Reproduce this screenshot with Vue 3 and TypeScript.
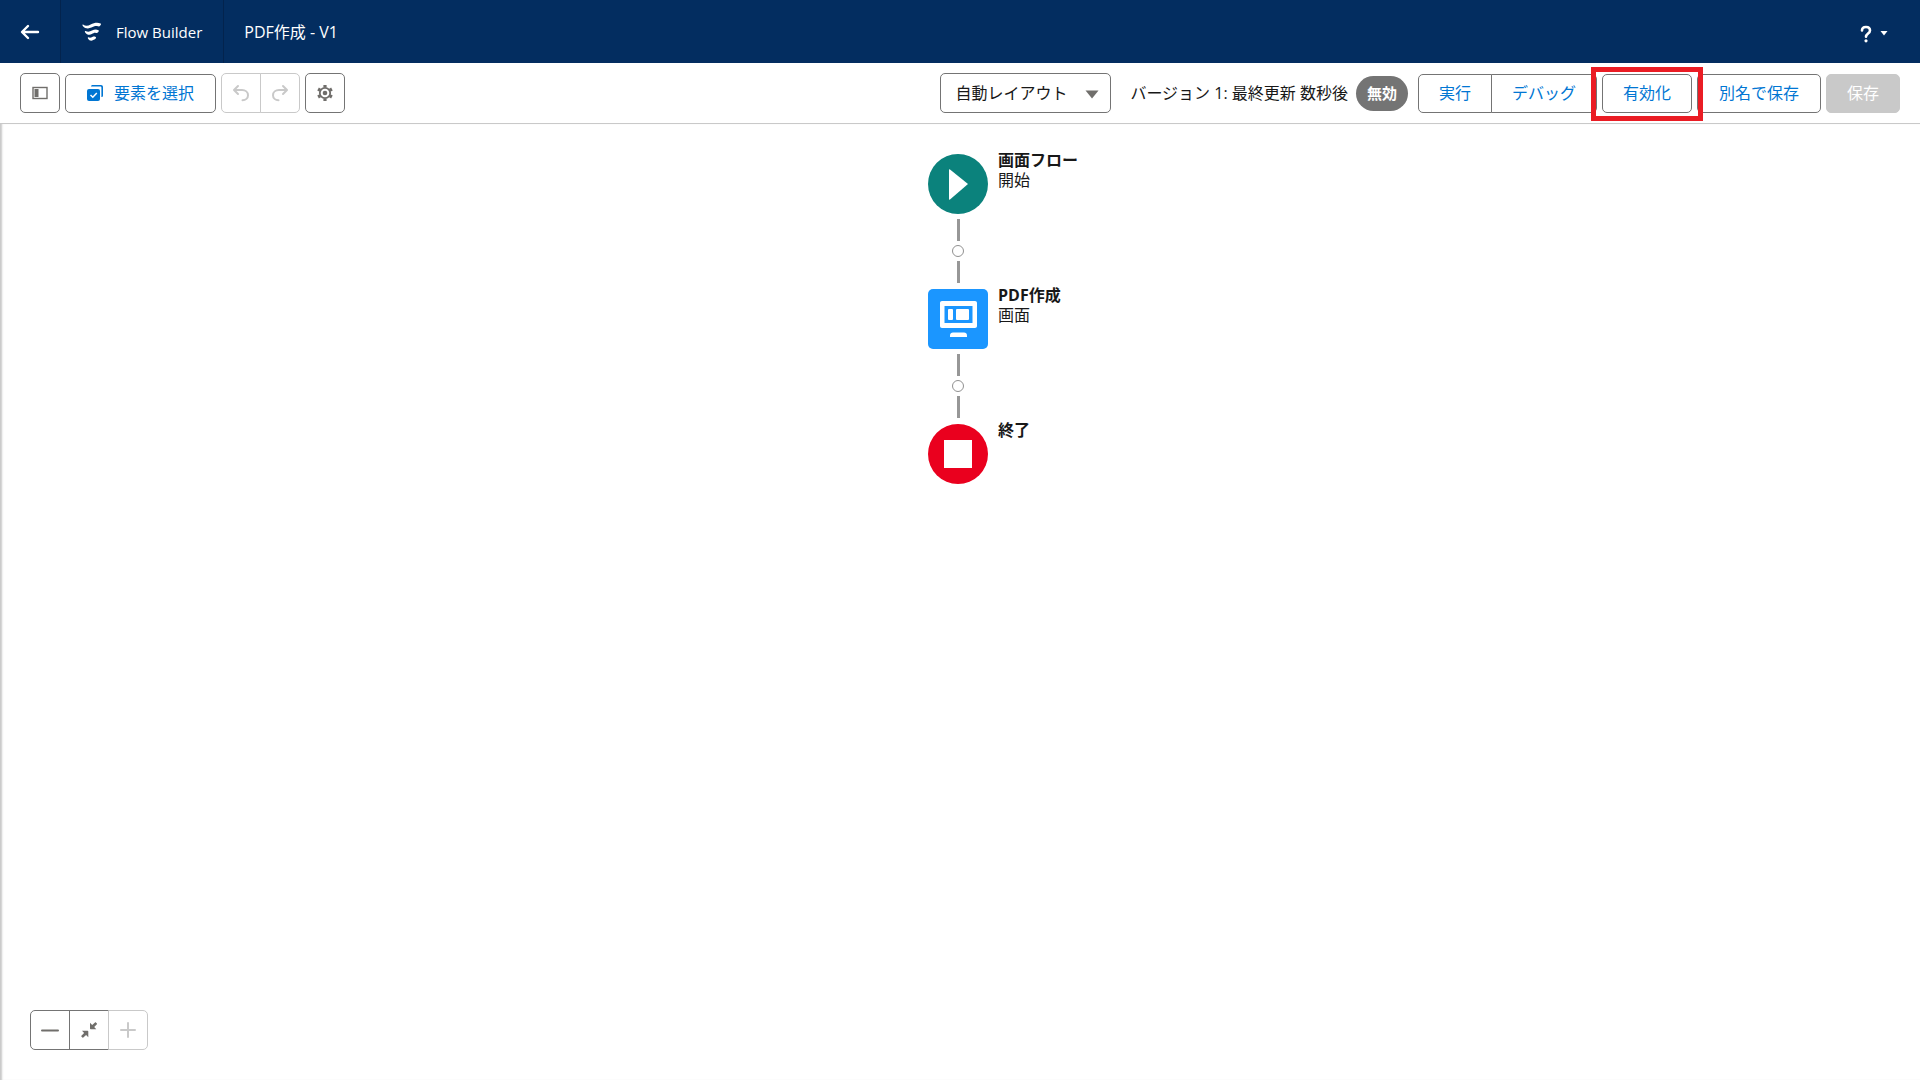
<script setup lang="ts">
import { ref } from 'vue'

type NodeKind = 'start' | 'screen' | 'end'

interface FlowNode {
  kind: NodeKind
  title: string
  subtitle?: string
}

const layout = ref('auto')

const nodes: FlowNode[] = [
  { kind: 'start', title: '画面フロー', subtitle: '開始' },
  { kind: 'screen', title: 'PDF作成', subtitle: '画面' },
  { kind: 'end', title: '終了' },
]
</script>

<template>
  <div class="builder">
    <header class="header">
      <a class="back" href="#" aria-label="戻る">
        <svg width="20" height="16" viewBox="0 0 20 16" fill="none" stroke="#fff" stroke-width="2.4" stroke-linecap="round" stroke-linejoin="round">
          <path d="M18 8H2.4M8 2L2 8l6 6" />
        </svg>
      </a>
      <div class="brand">
        <svg width="20" height="20" viewBox="0 0 20 20" fill="#fff">
          <path d="M1 2.6C3.600 4.400 6 4 8.600 2.600C12 .8 15.500 .2 18.600 1.500C19.300 1.800 19 2.700 18.500 3.200C17.600 4.300 17 4.700 15.800 4.300C13.600 3.700 11.600 4.500 9.400 5.600C6.400 7 3 6.600 1 4.200C.4 3.400 .2 2.200 1 2.600Z" />
          <path d="M3.500 9C6 10.200 7.800 9.800 10 8.600C12.200 7.500 14.300 7.200 16.400 8.200C17.200 8.600 16.800 9.400 16.300 10C15.500 11 14.800 11.200 13.800 10.900C12.400 10.600 11.300 11.300 9.800 12.100C7.400 13.300 4.600 12.600 3.200 10.400C2.700 9.600 2.700 8.600 3.500 9Z" />
          <path d="M6.400 15.300C8 16 9 15.600 10.300 15C11.400 14.400 12.600 14.400 13.700 15C14.400 15.500 14 16.200 13.500 16.800C12.700 17.800 12 17.600 11.200 18.100C9.400 19.300 7.200 18.800 6.100 16.800C5.700 15.900 5.600 15 6.400 15.300Z" />
        </svg>
        <span>Flow Builder</span>
      </div>
      <h1 class="flow-name">PDF作成 - V1</h1>
      <button class="help" type="button" aria-label="ヘルプ">
        <svg width="12" height="18" viewBox="0 0 12 18" fill="none">
          <path d="M2 5.500C2 3.300 3.700 2 6 2s4 1.400 4 3.500c0 3-4 3-4 6.300" stroke="#fff" stroke-width="2.600" stroke-linecap="round" />
          <circle cx="6" cy="15.800" r="1.600" fill="#fff" />
        </svg>
        <svg width="8" height="5" viewBox="0 0 8 5" fill="#fff"><path d="M.5 0h7L4 4.600z" /></svg>
      </button>
    </header>

    <div class="toolbar">
      <button class="btn icon" type="button" aria-label="ツールボックスを切り替え">
        <svg width="16" height="14" viewBox="0 0 16 14">
          <rect x="1" y="1.500" width="14" height="11" fill="none" stroke="#706e6b" stroke-width="1.400" />
          <rect x="2.500" y="3" width="4" height="8" fill="#706e6b" />
        </svg>
      </button>
      <button class="btn wide" type="button">
        <svg width="16" height="18" viewBox="0 0 16 18">
          <path d="M4 2.500C4 1.500 4.800 1 5.600 1H14c1.200 0 2 .8 2 2v8.400c0 1-.6 1.600-1.600 1.600V3.600c0-.7-.4-1.100-1.100-1.100z" fill="#0176d3" />
          <rect x="0" y="5" width="13" height="12" rx="2" fill="#0176d3" />
          <path d="M3.500 11l2.300 2.300 4-4.200" fill="none" stroke="#fff" stroke-width="1.500" />
        </svg>
        要素を選択
      </button>
      <div class="group">
        <button class="btn icon" type="button" disabled aria-label="元に戻す">
          <svg width="18" height="18" viewBox="0 0 18 18" fill="none" stroke="#c9c9c9" stroke-width="2" stroke-linecap="round" stroke-linejoin="round">
            <path d="M6 2L2 6l4 4M2.500 6H10c3.400 0 6 2.200 6 5.200 0 3-2.400 5-5.500 5" />
          </svg>
        </button>
        <button class="btn icon" type="button" disabled aria-label="やり直し">
          <svg width="18" height="18" viewBox="0 0 18 18" fill="none" stroke="#c9c9c9" stroke-width="2" stroke-linecap="round" stroke-linejoin="round">
            <path d="M12 2l4 4-4 4M15.500 6H8c-3.400 0-6 2.200-6 5.200 0 3 2.400 5 5.500 5" />
          </svg>
        </button>
      </div>
      <button class="btn icon" type="button" aria-label="設定">
        <svg width="18" height="18" viewBox="0 0 18 18" fill="none" stroke="#706e6b">
          <circle cx="9" cy="9" r="5.200" stroke-width="1.800" />
          <g stroke-width="3.200">
            <path d="M9 1v2.600M9 14.400V17M2.070 5l2.250 1.300M13.680 11.700L15.930 13M2.070 13l2.250-1.300M13.680 6.300L15.930 5" />
          </g>
          <circle cx="9" cy="9" r="2.300" fill="#706e6b" stroke="none" />
        </svg>
      </button>

      <div class="layout-picker">
        <select v-model="layout" aria-label="レイアウト">
          <option value="auto">自動レイアウト</option>
          <option value="free">自由形式</option>
        </select>
        <svg class="caret" width="14" height="9" viewBox="0 0 14 9" fill="#706e6b"><path d="M.5 .5h13L7 8.500z" /></svg>
      </div>
      <span class="version">バージョン 1: 最終更新 数秒後</span>
      <span class="badge">無効</span>
      <div class="group actions">
        <button class="btn" type="button">実行</button>
        <button class="btn" type="button">デバッグ</button>
      </div>
      <div class="highlighted">
        <button class="btn" type="button">有効化</button>
      </div>
      <button class="btn wide" type="button">別名で保存</button>
      <button class="btn save" type="button" disabled>保存</button>
    </div>

    <main class="canvas">
      <div class="flow">
        <template v-for="(node, i) in nodes" :key="node.kind">
          <div v-if="i > 0" class="connector">
            <span class="line"></span>
            <button class="add" type="button" aria-label="要素を追加"></button>
            <span class="line"></span>
          </div>
          <div class="node" :class="node.kind">
            <svg v-if="node.kind === 'start'" width="60" height="60" viewBox="0 0 60 60">
              <path d="M22 15.500L40 30 22 45.500c-.6.400-1 .200-1-.5V16c0-.7.400-.9 1-.5z" fill="#fff" />
            </svg>
            <svg v-else-if="node.kind === 'screen'" width="60" height="60" viewBox="0 0 60 60">
              <path fill="#fff" fill-rule="evenodd" d="M14 12h33c1.200 0 2 .8 2 2v23c0 1.200-.8 2-2 2H14c-1.200 0-2-.8-2-2V14c0-1.200.8-2 2-2zM16.500 17v17h28V17z" />
              <rect x="20" y="20" width="5" height="11" rx="1" fill="#fff" />
              <rect x="28" y="20" width="13" height="11" rx="1" fill="#fff" />
              <path d="M22 48v-1.500c0-1.800 1.200-3 3-3h11c1.800 0 3 1.200 3 3V48z" fill="#fff" />
            </svg>
            <svg v-else width="60" height="60" viewBox="0 0 60 60">
              <rect x="16" y="16" width="28" height="28" fill="#fff" />
            </svg>
            <div class="label">
              <strong>{{ node.title }}</strong>
              <span v-if="node.subtitle">{{ node.subtitle }}</span>
            </div>
          </div>
        </template>
      </div>

      <div class="group zoom">
        <button class="btn icon" type="button" aria-label="縮小">
          <svg width="18" height="18" viewBox="0 0 18 18"><path d="M1 9.500h16" stroke="#706e6b" stroke-width="2" stroke-linecap="round" /></svg>
        </button>
        <button class="btn icon" type="button" aria-label="画面に合わせる">
          <svg width="18" height="18" viewBox="0 0 18 18" fill="#706e6b">
            <path d="M10 1.800v5.700c0 .4.300.7.700.7h5.600L14.200 6l2.700-2.700c.3-.3.300-.6 0-.9l-1-1c-.3-.3-.6-.3-.9 0L12.200 4z" />
            <path d="M8.300 16.200v-5.700c0-.4-.3-.7-.7-.7H2L4.100 12l-2.700 2.700c-.3.300-.3.600 0 .9l1 1c.3.300.6.300.9 0L6.100 14z" />
          </svg>
        </button>
        <button class="btn icon" type="button" disabled aria-label="拡大">
          <svg width="18" height="18" viewBox="0 0 18 18"><path d="M2 9h14M9 2v14" stroke="#c9c9c9" stroke-width="2" stroke-linecap="round" /></svg>
        </button>
      </div>
    </main>
  </div>
</template>

<style>
body {
  margin: 0;
}
</style>

<style scoped>
.builder {
  display: flex;
  flex-direction: column;
  min-height: 100vh;
  background: #fff;
  color: #181818;
  font: 16px/20px "Open Sans", "Noto Sans CJK JP", sans-serif;
}

button,
select {
  box-sizing: border-box;
  margin: 0;
  font: inherit;
}

svg {
  display: block;
  flex: none;
}

.header {
  display: flex;
  height: 63px;
  background: #032d60;
  color: #fff;
  font-size: 15px;
}

.back,
.brand,
.flow-name {
  display: flex;
  align-items: center;
}

.back {
  width: 60px;
  justify-content: center;
  border-right: 1px solid #03234d;
}

.brand {
  gap: 14px;
  padding: 0 21px;
  border-right: 1px solid #03234d;
}

.flow-name {
  margin: 0;
  padding-left: 20px;
  font-size: 16px;
  font-weight: 400;
}

.help {
  display: flex;
  align-items: center;
  gap: 8px;
  margin-left: auto;
  padding: 4px 32px 0 20px;
  border: 0;
  background: none;
}

.toolbar {
  display: flex;
  align-items: center;
  box-sizing: border-box;
  height: 61px;
  padding: 0 20px;
  gap: 5px;
  border-bottom: 1px solid #c9c9c9;
  white-space: nowrap;
}

.btn {
  display: flex;
  align-items: center;
  justify-content: center;
  height: 39px;
  padding: 0 20px;
  border: 1px solid #747474;
  border-radius: 5px;
  background: #fff;
  color: #0176d3;
}

.btn.icon {
  width: 40px;
  height: 40px;
  padding: 0;
}

.btn:disabled {
  border-color: #c9c9c9;
}

.btn.wide {
  gap: 11px;
  padding: 0 21px;
}

.group {
  display: flex;
}

.group .btn + .btn {
  margin-left: -1px;
  border-top-left-radius: 0;
  border-bottom-left-radius: 0;
}

.group .btn:not(:last-child) {
  border-top-right-radius: 0;
  border-bottom-right-radius: 0;
}

.layout-picker {
  position: relative;
  margin-left: auto;
}

.layout-picker select {
  display: block;
  width: 171px;
  height: 40px;
  padding: 0 40px 0 14px;
  appearance: none;
  border: 1px solid #747474;
  border-radius: 5px;
  background: #fff;
  color: #181818;
}

.caret {
  position: absolute;
  top: 17px;
  right: 12px;
  pointer-events: none;
}

.version {
  margin: 0 3px 0 14px;
}

.badge {
  padding: 7px 11px 8px;
  border-radius: 18px;
  background: #747474;
  color: #fff;
  font-size: 15px;
  font-weight: 700;
}

.actions {
  margin-left: 5px;
}

.highlighted {
  position: relative;
}

.highlighted::after {
  content: "";
  position: absolute;
  inset: -7px -11px -8px;
  border: 5px solid #ea1c24;
  pointer-events: none;
}

.btn.save {
  border-color: #c9c9c9;
  background: #c9c9c9;
  color: #fff;
}

.canvas {
  position: relative;
  display: flex;
  flex: 1;
  justify-content: center;
  padding: 30px 4px 100px 0;
  box-shadow: inset 3px 0 2px -1px #c9c9c9;
}

.flow {
  width: 60px;
}

.node {
  position: relative;
  width: 60px;
  height: 60px;
}

.node.start {
  border-radius: 50%;
  background: #0b827c;
}

.node.screen {
  border-radius: 5px;
  background: #1b96ff;
}

.node.end {
  border-radius: 50%;
  background: #ea001e;
}

.label {
  position: absolute;
  top: -4px;
  left: 70px;
  display: flex;
  flex-direction: column;
  white-space: nowrap;
}

.connector {
  display: flex;
  flex-direction: column;
  align-items: center;
  gap: 4px;
  box-sizing: border-box;
  height: 75px;
  padding-top: 5px;
}

.line {
  width: 3px;
  height: 22px;
  background: #979797;
}

.add {
  width: 12px;
  height: 12px;
  padding: 0;
  border: 1px solid #919191;
  border-radius: 50%;
  background: #fff;
}

.zoom {
  position: absolute;
  bottom: 30px;
  left: 30px;
}
</style>
